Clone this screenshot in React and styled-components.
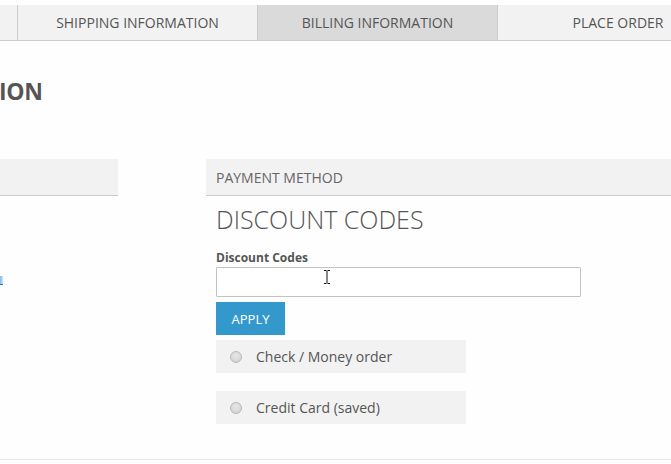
import React from "react";
import styled, { createGlobalStyle } from "styled-components";

const Global = createGlobalStyle`
  html, body { margin: 0; padding: 0; background: #fefefe; }
  body { font-family: "Open Sans", "Liberation Sans", sans-serif; color: #555; overflow: hidden; width: 671px; height: 464px; }
  * { box-sizing: border-box; }
`;

const Page = styled.div`
  width: 671px;
  height: 460px;
  overflow: hidden;
  padding-top: 5px;
  display: flex;
  flex-direction: column;
  border-bottom: 1px solid #e6e6e6;
`;

const TabBar = styled.div`
  display: flex;
  height: 36px;
  background: #f2f2f2;
  border-bottom: 1px solid #cccccc;
  overflow: hidden;
  flex-shrink: 0;
`;

const Tab = styled.div`
  flex: 0 0 ${(p) => p.$w}px;
  display: flex;
  align-items: center;
  justify-content: center;
  background: ${(p) => (p.$active ? "#dadada" : "#f2f2f2")};
  border-right: ${(p) => (p.$last ? "none" : "1px solid #cccccc")};
  font-size: 14px;
  color: #555;
  text-transform: uppercase;
  letter-spacing: 0;
  white-space: nowrap;
`;

const Heading = styled.h1`
  margin: 39px 0 0 -1px;
  height: 79px;
  font-size: 23px;
  font-weight: 700;
  color: #555;
  letter-spacing: -0.3px;
  line-height: 1;
`;

const Columns = styled.div`
  display: flex;
  gap: 88px;
  align-items: flex-start;
`;

const LeftCol = styled.div`
  flex: 0 0 118px;
  display: flex;
  flex-direction: column;
`;

const RightCol = styled.div`
  flex: 1;
  display: flex;
  flex-direction: column;
`;

const SectionHead = styled.div`
  height: 37px;
  background: #f2f2f2;
  border-bottom: 1px solid #cccccc;
  display: flex;
  align-items: center;
  padding-left: 10px;
  font-size: 14px;
  color: #666;
  text-transform: uppercase;
  letter-spacing: 0;
`;

const LinkStub = styled.a`
  display: block;
  margin-top: 80px;
  width: 3px;
  height: 9px;
  border-bottom: 1px solid #1979c3;
  background: linear-gradient(to right, #7fb9e6, #cfe4f5);
`;

const Body = styled.div`
  padding: 0 0 0 10px;
  display: flex;
  flex-direction: column;
`;

const Title = styled.h2`
  margin: 9px 0 0;
  font-size: 25px;
  font-weight: 300;
  color: #555;
  line-height: 28px;
  letter-spacing: 0;
`;

const Label = styled.label`
  margin-top: 18px;
  font-size: 12px;
  font-weight: 700;
  color: #555;
  line-height: 14px;
`;

const InputWrap = styled.div`
  position: relative;
  margin-top: 2px;
  width: 365px;
`;

const Input = styled.input`
  width: 365px;
  height: 30px;
  border: 1px solid #c2c2c2;
  border-radius: 1px;
  background: #fff;
  font-size: 13px;
  padding: 0 8px;
  outline: none;
`;

const Cursor = styled.svg`
  position: absolute;
  left: 107px;
  top: 3px;
`;

const Apply = styled.button`
  margin-top: 5px;
  width: 69px;
  height: 33px;
  border: none;
  background: #3399cc;
  color: #fff;
  font-family: inherit;
  font-size: 13px;
  text-transform: uppercase;
  padding: 0;
  cursor: pointer;
`;

const Options = styled.div`
  margin-top: 5px;
  display: flex;
  flex-direction: column;
  gap: 18px;
`;

const Option = styled.div`
  width: 250px;
  height: 33px;
  background: #f2f2f2;
  display: flex;
  align-items: center;
  padding-left: 14px;
  gap: 14px;
  font-size: 14px;
  color: #555;
`;

const Radio = styled.span`
  width: 12px;
  height: 12px;
  border-radius: 50%;
  border: 1px solid #b8b8b8;
  background: radial-gradient(circle at 50% 35%, #e8e8e8, #cfcfcf);
  flex-shrink: 0;
`;

export default function App() {
  return (
    <>
      <Global />
      <Page>
        <TabBar>
          <Tab $w={18}></Tab>
          <Tab $w={240}>Shipping Information</Tab>
          <Tab $w={240} $active>Billing Information</Tab>
          <Tab $w={240} $last>Place Order</Tab>
        </TabBar>
        <Heading>ION</Heading>
        <Columns>
          <LeftCol>
            <SectionHead />
            <LinkStub href="#" />
          </LeftCol>
          <RightCol>
            <SectionHead>Payment Method</SectionHead>
            <Body>
              <Title>DISCOUNT CODES</Title>
              <Label>Discount Codes</Label>
              <InputWrap>
                <Input />
                <Cursor width="8" height="14" viewBox="0 0 8 14">
                  <path d="M1 0.5h2.5M4.5 0.5H7M4 1v12M1 13.5h2.5M4.5 13.5H7" stroke="#111" strokeWidth="1" fill="none" />
                </Cursor>
              </InputWrap>
              <Apply>Apply</Apply>
              <Options>
                <Option><Radio />Check / Money order</Option>
                <Option><Radio />Credit Card (saved)</Option>
              </Options>
            </Body>
          </RightCol>
        </Columns>
      </Page>
    </>
  );
}
